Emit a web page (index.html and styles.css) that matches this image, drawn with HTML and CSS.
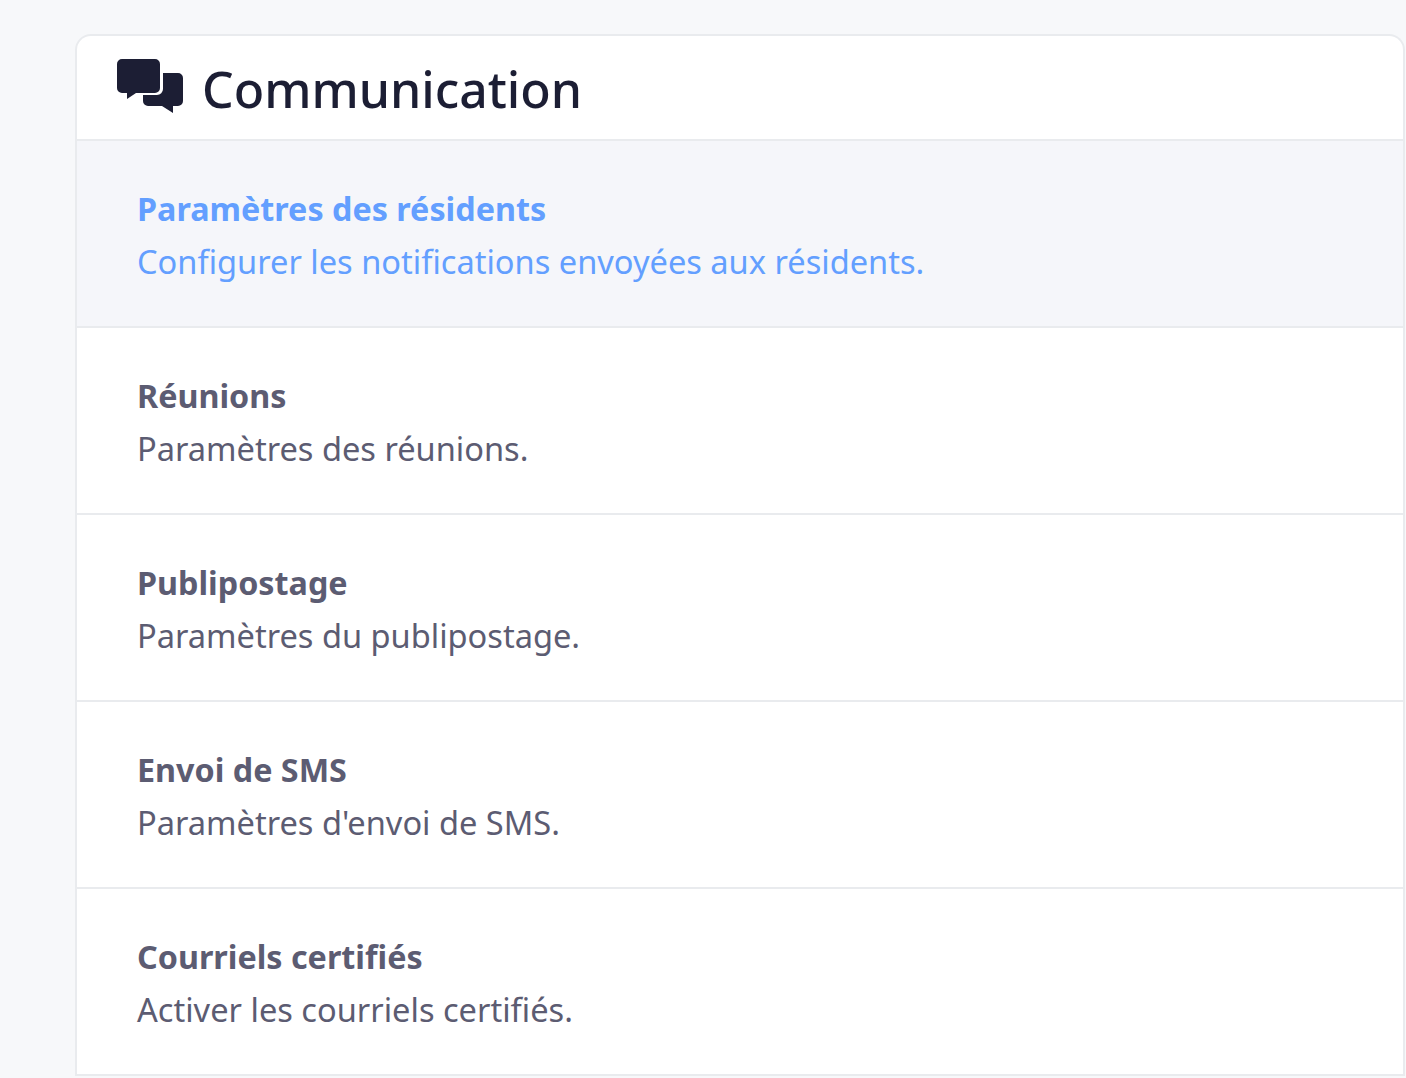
FILE: index.html
```html
<!DOCTYPE html>
<html lang="fr">
<head>
<meta charset="utf-8">
<title>Communication</title>
<link rel="stylesheet" href="styles.css">
</head>
<body>
<section class="card">
  <header class="head">
    <svg class="icon" viewBox="0 0 66 54" width="66" height="54"><path fill="#1c1e34" d="M5 0h33a5 5 0 0 1 5 5v24a5 5 0 0 1-5 5H19L10 40v-6H5a5 5 0 0 1-5-5V5a5 5 0 0 1 5-5z"/><path fill="#1c1e34" d="M46 14h15a5 5 0 0 1 5 5v23a5 5 0 0 1-5 5h-5v7L45 47H31a5 5 0 0 1-5-5v-6h14a6 6 0 0 0 6-6z"/></svg>
    <h1>Communication</h1>
  </header>
  <a class="row active"><strong>Paramètres des résidents</strong><span>Configurer les notifications envoyées aux résidents.</span></a>
  <a class="row"><strong>Réunions</strong><span>Paramètres des réunions.</span></a>
  <a class="row"><strong>Publipostage</strong><span>Paramètres du publipostage.</span></a>
  <a class="row"><strong>Envoi de SMS</strong><span>Paramètres d'envoi de SMS.</span></a>
  <a class="row"><strong>Courriels certifiés</strong><span>Activer les courriels certifiés.</span></a>
</section>
</body>
</html>
```
FILE: styles.css
```css
html, body { margin: 0; height: 100%; overflow: hidden; }
body { background: #f7f8fa; font-family: "Noto Sans", "Open Sans", sans-serif; padding: 34px 1px 0 75px; box-sizing: border-box; }
.card { background: #fff; border: 2px solid #e9ebee; border-bottom: 0; border-radius: 16px 16px 0 0; }
.head { display: flex; align-items: center; gap: 20px; height: 103px; padding-left: 40px; border-bottom: 2px solid #e9ebee; }
.icon { flex: none; margin-top: -4px; }
.head h1 { margin: 0 0 0 -1px; padding-top: 5px; font-size: 49.9px; font-weight: 500; color: #1c1e34; line-height: 1; }
.row { display: flex; flex-direction: column; justify-content: center; height: 183px; padding: 2px 0 0 60px; border-bottom: 2px solid #e9ebee; color: #5c5c72; font-size: 32.6px; line-height: 53px; }
.row strong { font-weight: 700; font-size: 32.3px; }
.active { background: #f5f6fa; color: #639fff; }
```
